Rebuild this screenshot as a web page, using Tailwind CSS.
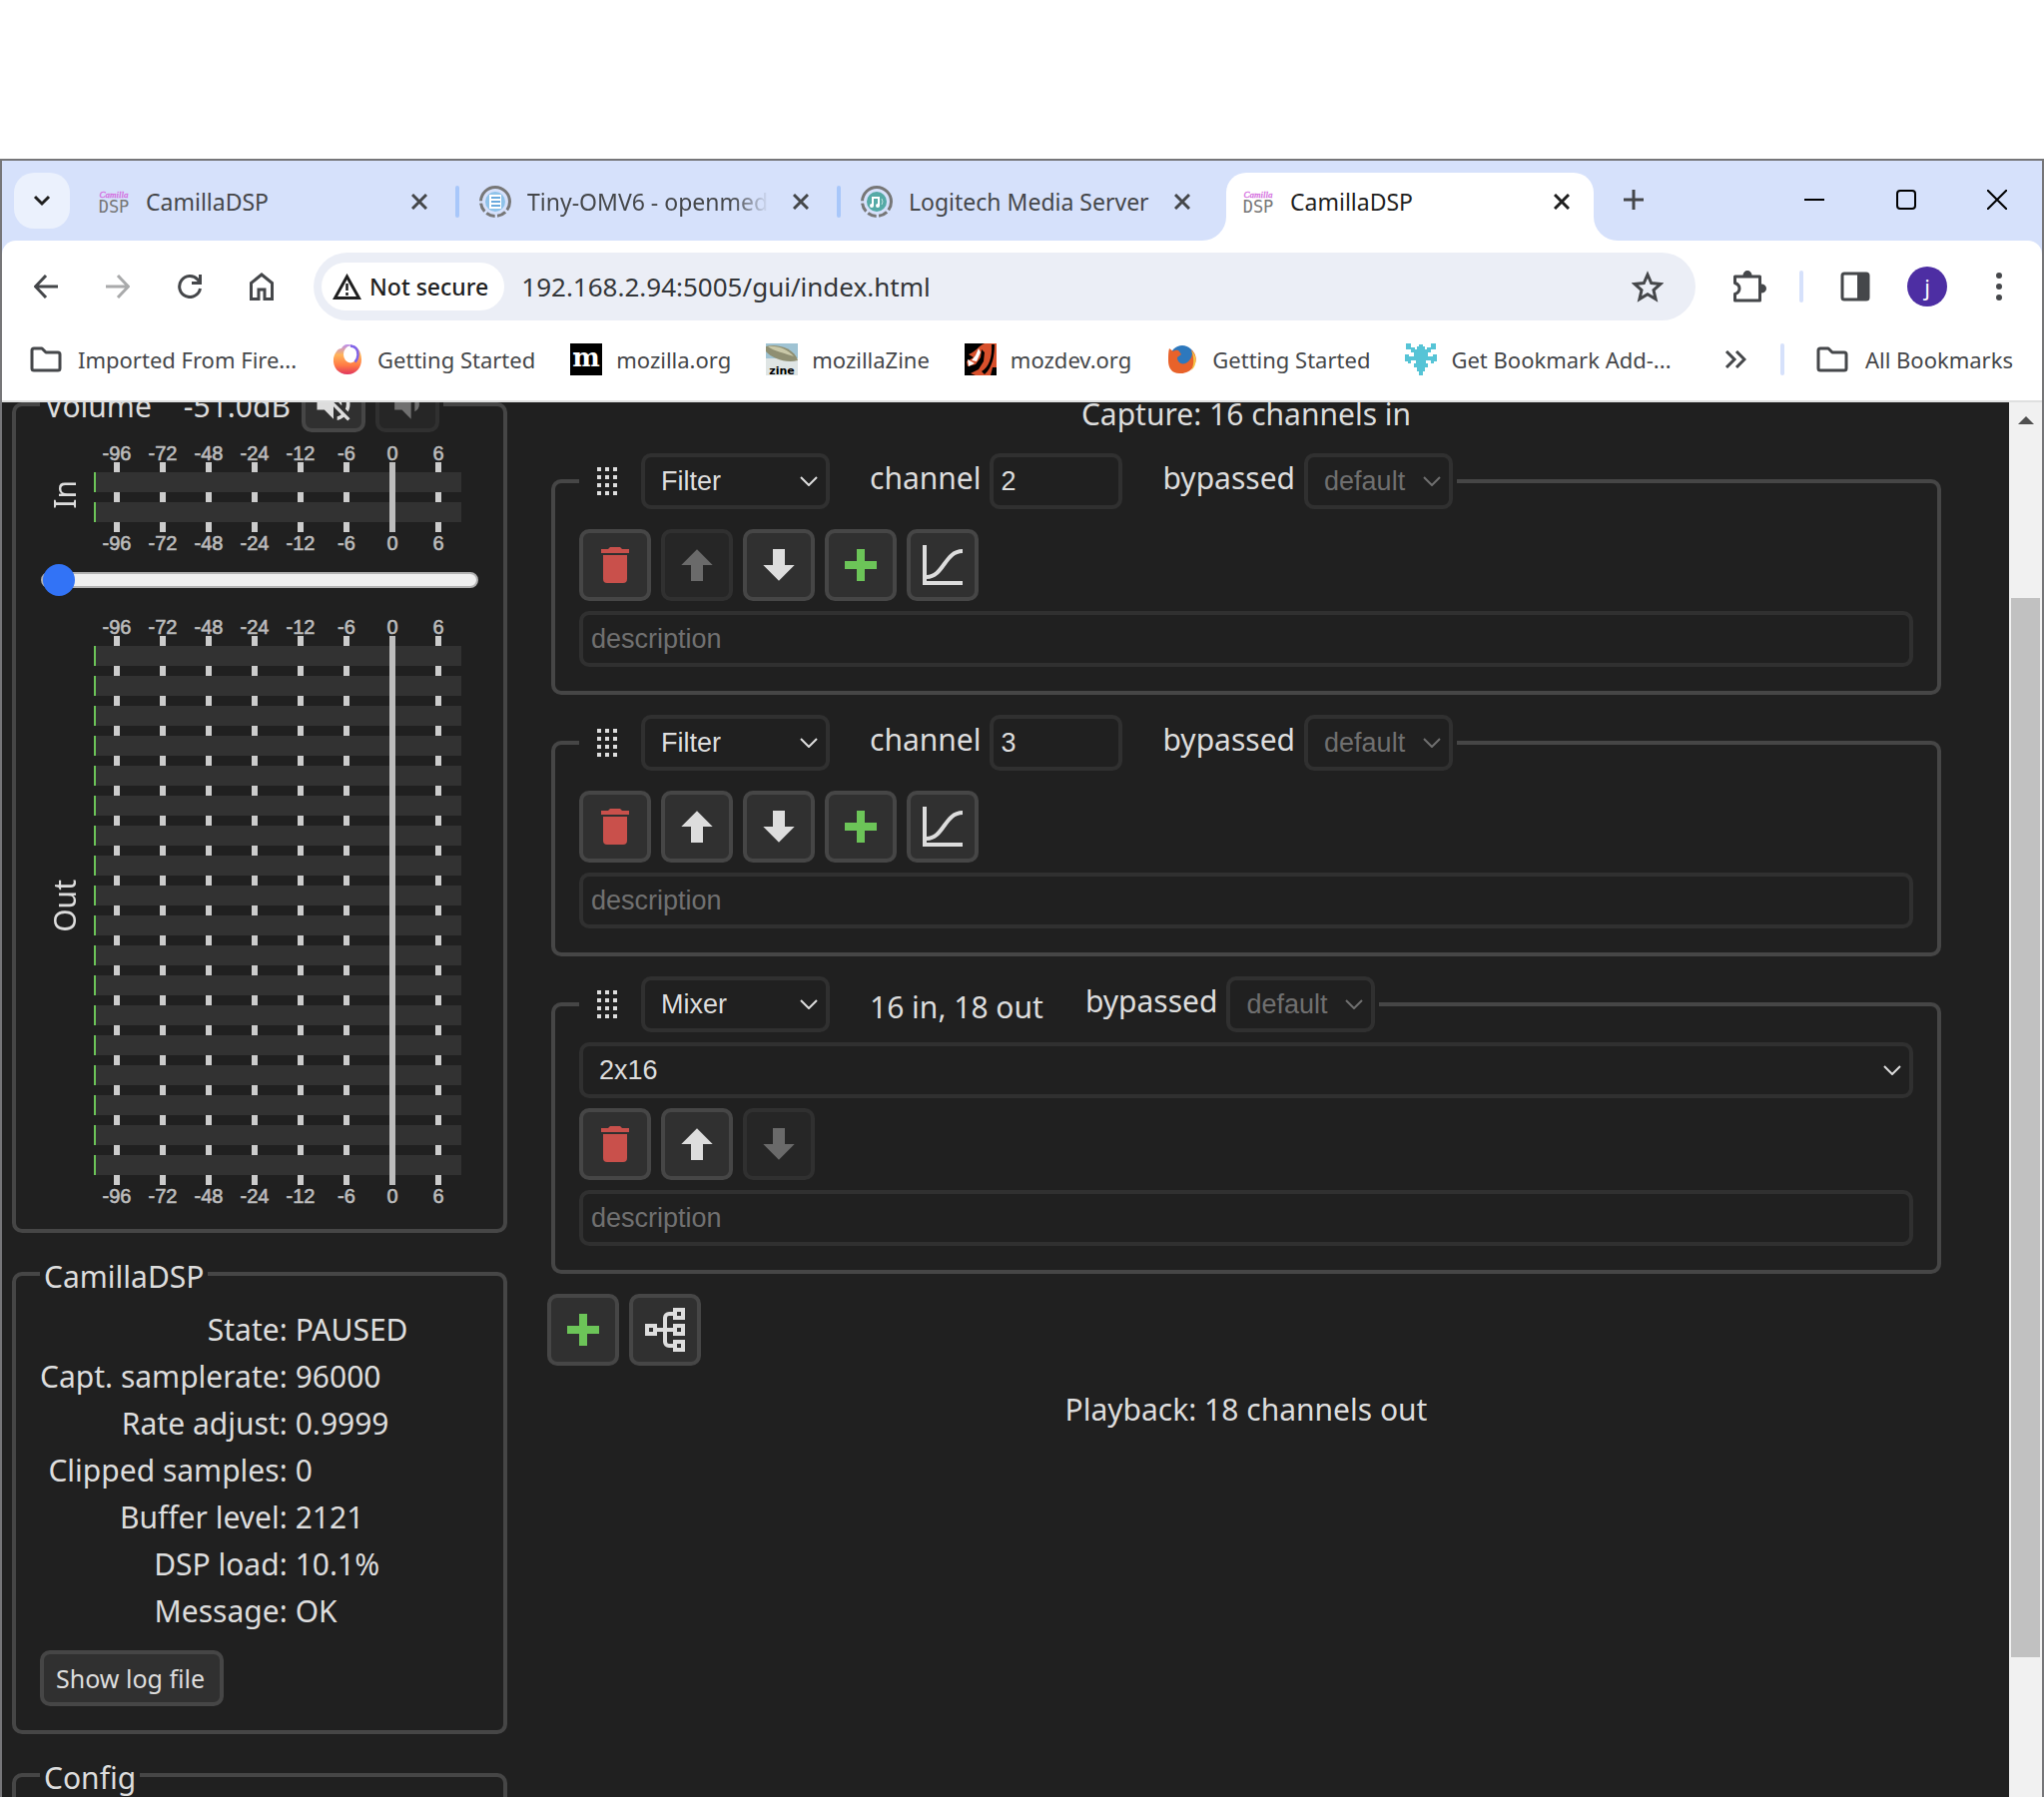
<!DOCTYPE html>
<html lang="en">
<head>
<meta charset="utf-8">
<meta name="viewport" content="width=device-width, initial-scale=1">
<title>CamillaDSP</title>
<script src="https://cdn.jsdelivr.net/npm/@tailwindcss/browser@4"></script>
</head>
<body class="bg-white font-['Noto_Sans',sans-serif]">
<svg class="hidden" aria-hidden="true">
  <symbol id="trash" viewBox="0 0 24 24"><path fill="currentColor" d="M19,4H15.5L14.5,3H9.5L8.5,4H5V6H19M6,19A2,2 0 0,0 8,21H16A2,2 0 0,0 18,19V7H6V19Z"/></symbol>
  <symbol id="up" viewBox="0 0 24 24"><path fill="currentColor" d="M15,20H9V12H4.16L12,4.16L19.84,12H15V20Z"/></symbol>
  <symbol id="down" viewBox="0 0 24 24"><path fill="currentColor" d="M9,4H15V12H19.84L12,19.84L4.16,12H9V4Z"/></symbol>
  <symbol id="plus" viewBox="0 0 24 24"><path fill="currentColor" d="M20 14H14V20H10V14H4V10H10V4H14V10H20V14Z"/></symbol>
  <symbol id="curve" viewBox="0 0 24 24"><path fill="none" stroke="currentColor" stroke-width="2" d="M3 2V21H22M4 18C12.500 18 13 5 22 5"/></symbol>
  <symbol id="tree" viewBox="0 0 24 24"><path fill="none" stroke="currentColor" stroke-width="2" d="M3 10h4v4H3zM17 2h4v4h-4zM17 10h4v4h-4zM17 18h4v4h-4zM8 12h8M16 4h-2a2 2 0 0 0-2 2v12a2 2 0 0 0 2 2h2"/></symbol>
  <symbol id="grip" viewBox="0 0 20 28"><path fill="currentColor" d="M0 0h4v4H0zM8 0h4v4H8zM16 0h4v4h-4zM0 8h4v4H0zM8 8h4v4H8zM16 8h4v4h-4zM0 16h4v4H0zM8 16h4v4H8zM16 16h4v4h-4zM0 24h4v4H0zM8 24h4v4H8zM16 24h4v4h-4z"/></symbol>
  <symbol id="chev" viewBox="0 0 18 10"><path fill="none" stroke="currentColor" stroke-width="2" d="M1 1l8 8 8-8"/></symbol>
  <symbol id="x" viewBox="0 0 16 16"><path fill="none" stroke="currentColor" stroke-width="3" d="M1 1l14 14M15 1L1 15"/></symbol>
  <symbol id="folder" viewBox="0 0 32 26"><path fill="none" stroke="currentColor" stroke-width="3" stroke-linejoin="round" d="M2 4a2 2 0 0 1 2-2h8l4 4h12a2 2 0 0 1 2 2v14a2 2 0 0 1-2 2H4a2 2 0 0 1-2-2z"/></symbol>
  <symbol id="camilla" viewBox="0 0 32 32">
    <text x="16" y="12" text-anchor="middle" font-family="Liberation Serif, serif" font-style="italic" font-size="9" fill="#d46be0" stroke="#d46be0" stroke-width="0.3">Camilla</text>
    <text x="16" y="27" text-anchor="middle" font-family="DejaVu Sans Mono, monospace" font-size="17" fill="#777">DSP</text>
  </symbol>
</svg>

<div class="h-screen pt-[159px]">
<div class="flex h-full flex-col overflow-hidden border-x-2 border-t-2 border-[#767679]">

  <header class="bg-[#d6e1fb]">
    <div class="flex h-20 items-end">
      <button aria-label="Search tabs" class="mb-3 ml-3 flex size-14 shrink-0 items-center justify-center rounded-[20px] bg-[#ebf1fd] text-[#1f1f1f]">
        <svg class="h-3 w-[18px]" viewBox="0 0 18 12"><path fill="none" stroke="currentColor" stroke-width="3" d="M2 2l7 7 7-7"/></svg>
      </button>
      <div class="ml-2 flex h-[68px] w-[382px] min-w-0 items-center pb-[10px] pl-5 text-[23px] text-[#45474a]">
        <svg class="size-8 shrink-0"><use href="#camilla"/></svg>
        <span class="ml-4 flex-1 overflow-hidden whitespace-nowrap">CamillaDSP</span>
        <button aria-label="Close tab" class="ml-6 mr-7"><svg class="size-4"><use href="#x"/></svg></button>
        <span class="h-8 w-1 rounded-full bg-[#a8c7fa]"></span>
      </div>
      <div class="flex h-[68px] w-[382px] min-w-0 items-center pb-[10px] pl-5 text-[23px] text-[#45474a]">
        <svg class="size-8 shrink-0" viewBox="0 0 32 32"><circle cx="16" cy="16" r="14.500" fill="none" stroke="#777" stroke-width="3" stroke-dasharray="9 2.500 9 2.500 9 2.500 9 2.500 45"/><circle cx="16" cy="16" r="10" fill="#8fc3ea"/><path fill="#fff" d="M10 9h12v14H10z"/><path stroke="#6aa9dd" stroke-width="2" d="M12 12h9M12 16h9M12 20h9"/></svg>
        <span class="ml-4 flex-1 overflow-hidden whitespace-nowrap [mask-image:linear-gradient(to_right,black_85%,transparent)]">Tiny-OMV6 - openmediavault</span>
        <button aria-label="Close tab" class="ml-6 mr-7"><svg class="size-4"><use href="#x"/></svg></button>
        <span class="h-8 w-1 rounded-full bg-[#a8c7fa]"></span>
      </div>
      <div class="flex h-[68px] w-[382px] min-w-0 items-center pb-[10px] pl-5 text-[23px] text-[#45474a]">
        <svg class="size-8 shrink-0" viewBox="0 0 32 32"><circle cx="16" cy="16" r="14.500" fill="none" stroke="#777" stroke-width="3" stroke-dasharray="9 2.500 9 2.500 9 2.500 9 2.500 45"/><circle cx="16" cy="16" r="10" fill="#55aaa6"/><path fill="none" stroke="#fff" stroke-width="2" d="M12 20v-8h6v8"/><circle cx="11" cy="20" r="2" fill="#fff"/><circle cx="17" cy="20" r="2" fill="#fff"/><path fill="none" stroke="#bfe0de" stroke-width="1" d="M21 13q2 3 0 6"/></svg>
        <span class="ml-4 flex-1 overflow-hidden whitespace-nowrap">Logitech Media Server</span>
        <button aria-label="Close tab" class="ml-6 mr-8"><svg class="size-4"><use href="#x"/></svg></button>
      </div>
      <div class="relative ml-1 flex h-[68px] w-[368px] min-w-0 items-center rounded-t-[20px] bg-white pb-[10px] pl-4 text-[23px] text-[#1f1f1f]">
        <svg class="absolute -left-6 bottom-0 size-6" viewBox="0 0 24 24"><path fill="#fff" d="M24 0v24H0A24 24 0 0 0 24 0z"/></svg>
        <svg class="absolute -right-6 bottom-0 size-6" viewBox="0 0 24 24"><path fill="#fff" d="M0 0v24h24A24 24 0 0 1 0 0z"/></svg>
        <svg class="size-8 shrink-0"><use href="#camilla"/></svg>
        <span class="ml-4 flex-1 overflow-hidden whitespace-nowrap">CamillaDSP</span>
        <button aria-label="Close tab" class="mr-6"><svg class="size-4"><use href="#x"/></svg></button>
      </div>
      <button aria-label="New tab" class="mb-[30px] ml-[29px] shrink-0 text-[#45474a]"><svg class="size-[22px]" viewBox="0 0 22 22"><path stroke="currentColor" stroke-width="3" d="M11 1v20M1 11h20"/></svg></button>
      <div class="mb-[21px] ml-auto flex shrink-0 text-black">
        <button aria-label="Minimize" class="flex h-10 w-[92px] items-center justify-center"><svg class="size-5" viewBox="0 0 20 20"><path stroke="currentColor" stroke-width="2" d="M0 10h20"/></svg></button>
        <button aria-label="Maximize" class="flex h-10 w-[92px] items-center justify-center"><svg class="size-5" viewBox="0 0 20 20"><rect x="1" y="1" width="18" height="18" rx="3" fill="none" stroke="currentColor" stroke-width="2"/></svg></button>
        <button aria-label="Close window" class="flex h-10 w-[90px] items-center justify-center"><svg class="size-5" viewBox="0 0 20 20"><path stroke="currentColor" stroke-width="2" d="M0 0l20 20M20 0L0 20"/></svg></button>
      </div>
    </div>

    <div class="rounded-t-[14px] border-b-2 border-[#dfe0e0] bg-white text-[#45474a]">
      <div class="flex items-center pt-3">
        <div class="ml-8 flex items-center gap-12">
          <button aria-label="Back"><svg class="size-6" viewBox="0 0 24 24"><path fill="none" stroke="currentColor" stroke-width="3" d="M24 12H2M12 1L1.500 12 12 23"/></svg></button>
          <button aria-label="Forward" class="text-[#a9aaab]"><svg class="size-6" viewBox="0 0 24 24"><path fill="none" stroke="currentColor" stroke-width="3" d="M0 12h22M12 1l10.500 11L12 23"/></svg></button>
          <button aria-label="Reload"><svg class="size-6" viewBox="0 0 24 24"><path fill="none" stroke="currentColor" stroke-width="3" d="M22.500 14A10.500 10.500 0 1 1 20 5l2.500 3"/><path fill="currentColor" d="M24 0v10H14V7h7V0z"/></svg></button>
          <button aria-label="Home"><svg class="h-7 w-6" viewBox="0 0 24 28"><path fill="none" stroke="currentColor" stroke-width="3" d="M1.500 26.500V10.500L12 2l10.500 8.500v16H15V17H9v9.500z"/></svg></button>
        </div>
        <div class="ml-10 flex h-[68px] flex-1 items-center rounded-full bg-[#ebeef6] pl-2 pr-8">
          <button class="flex h-12 items-center gap-2 rounded-full bg-white pl-[11px] pr-4 text-[23px] font-medium text-[#1f1f1f]">
            <svg class="h-[26px] w-[29px]" viewBox="0 0 29 26"><path fill="none" stroke="currentColor" stroke-width="3" d="M14.500 3L26.500 24.500h-24z"/><path stroke="currentColor" stroke-width="2.500" d="M14.500 10v7M14.500 19v3"/></svg>
            <span class="whitespace-nowrap">Not secure</span>
          </button>
          <input type="text" aria-label="Address" value="192.168.2.94:5005/gui/index.html" class="ml-[17px] min-w-0 flex-1 bg-transparent text-[26px] text-[#333639] outline-none">
          <button aria-label="Bookmark this page"><svg class="size-8" viewBox="0 0 32 32"><path fill="none" stroke="currentColor" stroke-width="3" d="M16 4l3.700 8.600 9.300.8-7 6.100 2.100 9.100L16 23.800l-8.100 4.800L10 19.500l-7-6.100 9.300-.8z"/></svg></button>
        </div>
        <button aria-label="Extensions" class="ml-[37px]"><svg class="h-8 w-[34px]" viewBox="0 0 34 32"><path fill="none" stroke="currentColor" stroke-width="3" stroke-linejoin="round" d="M2.500 6h25v24h-25v-6.500c6-2 6-9 0-11z"/><path fill="currentColor" d="M10.500 5a4.500 5 0 0 1 9 0zM29 13.500a5 4.500 0 0 1 0 9z"/></svg></button>
        <span class="ml-[33px] h-8 w-1 rounded-full bg-[#d6e1fb]"></span>
        <button aria-label="Side panel" class="ml-[37px]"><svg class="h-[30px] w-[30px]" viewBox="0 0 30 30"><rect x="2" y="2" width="26" height="26" rx="2" fill="none" stroke="currentColor" stroke-width="3"/><path fill="currentColor" d="M17 2h11v26H17z"/></svg></button>
        <button aria-label="Profile" class="ml-[37px] flex size-10 items-center justify-center rounded-full bg-[#4d2ea3] text-[22px] text-white">j</button>
        <button aria-label="Menu" class="ml-[49px] mr-10"><svg class="h-7 w-[6px]" viewBox="0 0 6 28"><path fill="currentColor" d="M3 0a3 3 0 1 1 0 6 3 3 0 0 1 0-6M3 11a3 3 0 1 1 0 6 3 3 0 0 1 0-6M3 22a3 3 0 1 1 0 6 3 3 0 0 1 0-6"/></svg></button>
      </div>
      <nav class="flex h-20 items-center whitespace-nowrap pb-[2px] pl-7 pr-[29px] text-[22px]">
        <div class="flex min-w-0 flex-1 items-center gap-[35px] overflow-hidden">
          <a href="#" class="flex items-center gap-4"><svg class="h-[26px] w-8"><use href="#folder"/></svg>Imported From Fire...</a>
          <a href="#" class="flex items-center gap-[14px]"><svg class="size-8" viewBox="0 0 32 32"><defs><linearGradient id="ffg" x1="0.500" x2="0.500" y1="0" y2="1"><stop offset="0" stop-color="#b98cf0"/><stop offset=".35" stop-color="#ffb45a"/><stop offset=".7" stop-color="#ff7a45"/><stop offset="1" stop-color="#e0355e"/></linearGradient></defs><path fill="url(#ffg)" d="M16 1C26 1 30 8 30 16S25 31 16 31 1 24 2 15C3 10 6 5 10 5c1-2 3-4 6-4z"/><ellipse cx="19" cy="11" rx="7" ry="8.500" fill="#fff"/><path fill="none" stroke="#8064e8" stroke-width="2.500" d="M19 2.500q8 1 7.500 9-.5 5-3 7"/></svg>Getting Started</a>
          <a href="#" class="flex items-center gap-[14px]"><svg class="size-8" viewBox="0 0 32 32"><path d="M0 0h32v32H0z"/><text x="16" y="23" text-anchor="middle" font-family="DejaVu Serif, serif" font-weight="bold" font-size="26" fill="#fff">m</text></svg>mozilla.org</a>
          <a href="#" class="flex items-center gap-[14px]"><svg class="size-8" viewBox="0 0 32 32"><path fill="#9fc3d3" d="M0 0h32v24H0z"/><path fill="#dfe5e4" d="M0 15h32v17H0z"/><path fill="#8f8f72" d="M0 3C10 0 28 4 32 17 20 20 6 15 0 8z"/><path fill="#c9c8a8" d="M2 3c10-1 20 3 26 10C20 10 8 8 2 3z"/><text x="16" y="31" text-anchor="middle" font-family="DejaVu Sans, sans-serif" font-weight="bold" font-size="11" fill="#000">zine</text></svg>mozillaZine</a>
          <a href="#" class="flex items-center gap-[14px]"><svg class="size-8" viewBox="0 0 32 32"><path fill="#d8502c" d="M0 0h32v32H0z"/><path d="M0 0h20C14 2 12 8 4 11l5 3-7 4 1 5 8-2 5-7 1-8 3 3-1 9-5 8-8 4 5 2H0zM27 1C28 14 24 24 17 28l3 3C28 24 30 12 30 1z"/><path fill="#fff" d="M14 5l2 4-4 9-5-1 4-5zM3 16l7 4-6 3z"/><path d="M28 24h4v8h-6z"/></svg>mozdev.org</a>
          <a href="#" class="flex items-center gap-[14px]"><svg class="size-8" viewBox="0 0 32 32"><circle cx="16" cy="14" r="12" fill="#2d78bd"/><path fill="#e8622a" d="M3 5l4 3c3-2 5-1 6 0l2 3-4 3c0 6 6 8 10 5 5-4 6-9 4-13 5 4 6 11 3 16-3 6-9 8-13 8C6 31 2 25 2 17c0-5 0-8 1-12z"/><path fill="#f6c544" d="M25 7c6 5 6 15 0 20 3-6 3-13 0-20z"/></svg>Getting Started</a>
          <a href="#" class="flex items-center gap-[14px]"><svg class="size-8" viewBox="0 0 32 32"><path fill="#56c4d6" d="M1 0h5v4h4v2h2V3h2V1h4v2h2v3h2V4h4V0h5v6h-5v3h-3v4h5v-2h4v7h-3v2h-3v-3h-5v3h2v4h-3v4h-2v4h-4v-4h-2v-4H9v-4h2v-3H6v3H3v-2H0v-7h4v2h5V9H6V6H1z"/></svg>Get Bookmark Add-...</a>
        </div>
        <button aria-label="More bookmarks" class="mr-[34px]"><svg class="h-[18px] w-[22px]" viewBox="0 0 22 18"><path fill="none" stroke="currentColor" stroke-width="3" d="M2 1l8 8-8 8M12 1l8 8-8 8"/></svg></button>
        <span class="h-8 w-1 rounded-full bg-[#d6e1fb]"></span>
        <a href="#" class="ml-8 flex items-center gap-[17px]"><svg class="h-[26px] w-8"><use href="#folder"/></svg>All Bookmarks</a>
      </nav>
    </div>
  </header>

  <div class="flex min-h-0 flex-1 overflow-hidden bg-[#202020] text-[30px] leading-[42px] text-[#dddddd]">
    <aside class="-mt-[26px] ml-[10px] flex w-[496px] shrink-0 flex-col gap-5">
      <fieldset class="shrink-0 rounded-[10px] border-4 border-[#464646] px-6 pb-[22px]">
        <legend class="flex h-14 items-center pl-[5px] pr-1">
          <span class="pt-1">Volume</span><span class="ml-8 pt-1">-51.0dB</span>
          <button aria-label="Mute" class="ml-[11px] flex h-14 w-16 items-center justify-center rounded-[10px] border-4 border-[#464646] bg-[#303030]"><svg class="size-11 shrink-0" viewBox="0 0 24 24"><path fill="currentColor" d="M12,4L9.91,6.09L12,8.18M4.27,3L3,4.27L7.73,9H3V15H7L12,20V13.27L16.25,17.53C15.58,18.04 14.83,18.46 14,18.7V20.77C15.38,20.45 16.63,19.82 17.68,18.96L19.73,21L21,19.73L12,10.73M19,12C19,12.94 18.8,13.82 18.46,14.64L19.97,16.15C20.62,14.91 21,13.5 21,12C21,7.72 18,4.14 14,3.23V5.29C16.89,6.15 19,8.83 19,12M16.5,12C16.5,10.23 15.5,8.71 14,7.97V10.18L16.45,12.63C16.5,12.43 16.5,12.21 16.5,12Z"/></svg></button>
          <button disabled aria-label="Dim" class="ml-[10px] flex h-14 w-16 items-center justify-center rounded-[10px] border-4 border-[#303030] bg-[#262626] text-[#707070]"><svg class="size-11 shrink-0" viewBox="0 0 24 24"><path fill="currentColor" d="M5,9V15H9L14,20V4L9,9M18.500,12C18.500,10.230 17.500,8.710 16,7.970V16C17.500,15.290 18.500,13.760 18.500,12Z"/></svg></button>
        </legend>
        <div class="mt-[10px] flex items-center">
          <span class="w-[54px] shrink-0 pb-2 pl-1"><span class="block w-[42px] rotate-180 text-center [writing-mode:vertical-rl]">In</span></span>
          <svg class="h-[112px] w-[368px]" data-meter="2"></svg>
        </div>
        <input type="range" aria-label="Volume" min="-51" max="0" value="-51" class="mx-auto my-[18px] block h-4 w-[438px] appearance-none rounded-full border-2 border-[#b2b2b2] bg-[#efefef] bg-linear-to-r from-[#3273f6] from-5% to-[#efefef] to-5% [&::-webkit-slider-thumb]:size-8 [&::-webkit-slider-thumb]:appearance-none [&::-webkit-slider-thumb]:rounded-full [&::-webkit-slider-thumb]:bg-[#3273f6]">
        <div class="mt-7 flex items-center">
          <span class="w-[54px] shrink-0 pb-3 pl-1"><span class="block w-[42px] rotate-180 text-center [writing-mode:vertical-rl]">Out</span></span>
          <svg class="h-[592px] w-[368px]" data-meter="18"></svg>
        </div>
      </fieldset>

      <fieldset class="shrink-0 rounded-[10px] border-4 border-[#464646] px-6 pb-6">
        <legend class="h-[42px] px-1 leading-[48px]">CamillaDSP</legend>
        <table class="mt-[11px] leading-[47px]">
          <tr><th scope="row" class="w-[242px] p-0 text-right font-normal whitespace-nowrap">State:</th><td class="pl-2">PAUSED</td></tr>
          <tr><th scope="row" class="p-0 text-right font-normal whitespace-nowrap">Capt. samplerate:</th><td class="pl-2">96000</td></tr>
          <tr><th scope="row" class="p-0 text-right font-normal whitespace-nowrap">Rate adjust:</th><td class="pl-2">0.9999</td></tr>
          <tr><th scope="row" class="p-0 text-right font-normal whitespace-nowrap">Clipped samples:</th><td class="pl-2">0</td></tr>
          <tr><th scope="row" class="p-0 text-right font-normal whitespace-nowrap">Buffer level:</th><td class="pl-2">2121</td></tr>
          <tr><th scope="row" class="p-0 text-right font-normal whitespace-nowrap">DSP load:</th><td class="pl-2">10.1%</td></tr>
          <tr><th scope="row" class="p-0 text-right font-normal whitespace-nowrap">Message:</th><td class="pl-2">OK</td></tr>
        </table>
        <button class="mt-4 flex h-14 items-center rounded-[10px] border-4 border-[#464646] bg-[#303030] pl-3 pr-[15px] text-[25px]">Show log file</button>
      </fieldset>

      <fieldset class="h-40 shrink-0 rounded-[10px] border-4 border-[#464646] px-6 pb-6">
        <legend class="h-[42px] px-1 leading-[48px]">Config</legend>
      </fieldset>
    </aside>

    <main class="-mt-[11px] ml-10 mr-16 flex min-w-0 flex-1 flex-col gap-5">
      <p class="h-[42px] text-center leading-[46px]">Capture: 16 channels in</p>

      <fieldset class="mx-1 rounded-[10px] border-4 border-[#464646] px-6 pb-6">
        <legend class="flex h-14 items-center pl-[18px] pr-1">
          <svg class="mr-6 h-7 w-5"><use href="#grip"/></svg>
          <span class="mr-10 grid items-center"><select aria-label="Step type" class="col-start-1 row-start-1 h-14 w-[189px] appearance-none rounded-[10px] border-4 border-[#303030] bg-[#202020] pl-4 font-['Liberation_Sans',sans-serif] text-[27px]"><option>Filter</option><option>Mixer</option></select><svg class="pointer-events-none col-start-1 row-start-1 mr-3 h-[10px] w-[18px] justify-self-end"><use href="#chev"/></svg></span>
          <label for="ch1" class="pb-[6px]">channel</label>
          <input id="ch1" type="text" value="2" class="ml-2 mr-[41px] h-14 w-[133px] rounded-[10px] border-4 border-[#303030] bg-[#202020] pl-2 font-['Liberation_Sans',sans-serif] text-[27px]">
          <label for="bp1" class="pb-[6px]">bypassed</label>
          <span class="ml-[9px] grid items-center text-[#6f6f6f]"><select id="bp1" disabled class="col-start-1 row-start-1 h-14 w-[149px] appearance-none rounded-[10px] border-4 border-[#303030] bg-[#202020] pl-4 font-['Liberation_Sans',sans-serif] text-[27px]"><option>default</option></select><svg class="pointer-events-none col-start-1 row-start-1 mr-3 h-[10px] w-[18px] justify-self-end"><use href="#chev"/></svg></span>
        </legend>
        <div class="mt-5 flex gap-[10px]">
          <button aria-label="Delete step" class="flex size-[72px] items-center justify-center rounded-[10px] border-4 border-[#464646] bg-[#303030] text-[#c9504b]"><svg class="size-12"><use href="#trash"/></svg></button>
          <button disabled aria-label="Move up" class="flex size-[72px] items-center justify-center rounded-[10px] border-4 border-[#303030] bg-[#262626] text-[#6a6a6a]"><svg class="size-12"><use href="#up"/></svg></button>
          <button aria-label="Move down" class="flex size-[72px] items-center justify-center rounded-[10px] border-4 border-[#464646] bg-[#303030]"><svg class="size-12"><use href="#down"/></svg></button>
          <button aria-label="Add filter" class="flex size-[72px] items-center justify-center rounded-[10px] border-4 border-[#464646] bg-[#303030] text-[#6cc458]"><svg class="size-12"><use href="#plus"/></svg></button>
          <button aria-label="Plot" class="flex size-[72px] items-center justify-center rounded-[10px] border-4 border-[#464646] bg-[#303030]"><svg class="size-12"><use href="#curve"/></svg></button>
        </div>
        <input type="text" aria-label="Description" placeholder="description" class="mt-[10px] block h-14 w-full rounded-[10px] border-4 border-[#303030] bg-[#202020] pl-2 font-['Liberation_Sans',sans-serif] text-[27px] placeholder:text-[#707070]">
      </fieldset>

      <fieldset class="mx-1 rounded-[10px] border-4 border-[#464646] px-6 pb-6">
        <legend class="flex h-14 items-center pl-[18px] pr-1">
          <svg class="mr-6 h-7 w-5"><use href="#grip"/></svg>
          <span class="mr-10 grid items-center"><select aria-label="Step type" class="col-start-1 row-start-1 h-14 w-[189px] appearance-none rounded-[10px] border-4 border-[#303030] bg-[#202020] pl-4 font-['Liberation_Sans',sans-serif] text-[27px]"><option>Filter</option><option>Mixer</option></select><svg class="pointer-events-none col-start-1 row-start-1 mr-3 h-[10px] w-[18px] justify-self-end"><use href="#chev"/></svg></span>
          <label for="ch2" class="pb-[6px]">channel</label>
          <input id="ch2" type="text" value="3" class="ml-2 mr-[41px] h-14 w-[133px] rounded-[10px] border-4 border-[#303030] bg-[#202020] pl-2 font-['Liberation_Sans',sans-serif] text-[27px]">
          <label for="bp2" class="pb-[6px]">bypassed</label>
          <span class="ml-[9px] grid items-center text-[#6f6f6f]"><select id="bp2" disabled class="col-start-1 row-start-1 h-14 w-[149px] appearance-none rounded-[10px] border-4 border-[#303030] bg-[#202020] pl-4 font-['Liberation_Sans',sans-serif] text-[27px]"><option>default</option></select><svg class="pointer-events-none col-start-1 row-start-1 mr-3 h-[10px] w-[18px] justify-self-end"><use href="#chev"/></svg></span>
        </legend>
        <div class="mt-5 flex gap-[10px]">
          <button aria-label="Delete step" class="flex size-[72px] items-center justify-center rounded-[10px] border-4 border-[#464646] bg-[#303030] text-[#c9504b]"><svg class="size-12"><use href="#trash"/></svg></button>
          <button aria-label="Move up" class="flex size-[72px] items-center justify-center rounded-[10px] border-4 border-[#464646] bg-[#303030]"><svg class="size-12"><use href="#up"/></svg></button>
          <button aria-label="Move down" class="flex size-[72px] items-center justify-center rounded-[10px] border-4 border-[#464646] bg-[#303030]"><svg class="size-12"><use href="#down"/></svg></button>
          <button aria-label="Add filter" class="flex size-[72px] items-center justify-center rounded-[10px] border-4 border-[#464646] bg-[#303030] text-[#6cc458]"><svg class="size-12"><use href="#plus"/></svg></button>
          <button aria-label="Plot" class="flex size-[72px] items-center justify-center rounded-[10px] border-4 border-[#464646] bg-[#303030]"><svg class="size-12"><use href="#curve"/></svg></button>
        </div>
        <input type="text" aria-label="Description" placeholder="description" class="mt-[10px] block h-14 w-full rounded-[10px] border-4 border-[#303030] bg-[#202020] pl-2 font-['Liberation_Sans',sans-serif] text-[27px] placeholder:text-[#707070]">
      </fieldset>

      <fieldset class="mx-1 rounded-[10px] border-4 border-[#464646] px-6 pb-6">
        <legend class="flex h-14 items-center pl-[18px] pr-1">
          <svg class="mr-6 h-7 w-5"><use href="#grip"/></svg>
          <span class="mr-10 grid items-center"><select aria-label="Step type" class="col-start-1 row-start-1 h-14 w-[189px] appearance-none rounded-[10px] border-4 border-[#303030] bg-[#202020] pl-4 font-['Liberation_Sans',sans-serif] text-[27px]"><option>Mixer</option><option>Filter</option></select><svg class="pointer-events-none col-start-1 row-start-1 mr-3 h-[10px] w-[18px] justify-self-end"><use href="#chev"/></svg></span>
          <span class="mr-[42px] pt-[6px]">16 in, 18 out</span>
          <label for="bp3" class="pb-[6px]">bypassed</label>
          <span class="ml-[9px] grid items-center text-[#6f6f6f]"><select id="bp3" disabled class="col-start-1 row-start-1 h-14 w-[149px] appearance-none rounded-[10px] border-4 border-[#303030] bg-[#202020] pl-4 font-['Liberation_Sans',sans-serif] text-[27px]"><option>default</option></select><svg class="pointer-events-none col-start-1 row-start-1 mr-3 h-[10px] w-[18px] justify-self-end"><use href="#chev"/></svg></span>
        </legend>
        <span class="mt-[10px] grid items-center"><select aria-label="Mixer" class="col-start-1 row-start-1 h-14 w-full appearance-none rounded-[10px] border-4 border-[#303030] bg-[#202020] pl-4 font-['Liberation_Sans',sans-serif] text-[27px]"><option>2x16</option></select><svg class="pointer-events-none col-start-1 row-start-1 mr-3 h-[10px] w-[18px] justify-self-end"><use href="#chev"/></svg></span>
        <div class="mt-[10px] flex gap-[10px]">
          <button aria-label="Delete step" class="flex size-[72px] items-center justify-center rounded-[10px] border-4 border-[#464646] bg-[#303030] text-[#c9504b]"><svg class="size-12"><use href="#trash"/></svg></button>
          <button aria-label="Move up" class="flex size-[72px] items-center justify-center rounded-[10px] border-4 border-[#464646] bg-[#303030]"><svg class="size-12"><use href="#up"/></svg></button>
          <button disabled aria-label="Move down" class="flex size-[72px] items-center justify-center rounded-[10px] border-4 border-[#303030] bg-[#262626] text-[#6a6a6a]"><svg class="size-12"><use href="#down"/></svg></button>
        </div>
        <input type="text" aria-label="Description" placeholder="description" class="mt-[10px] block h-14 w-full rounded-[10px] border-4 border-[#303030] bg-[#202020] pl-2 font-['Liberation_Sans',sans-serif] text-[27px] placeholder:text-[#707070]">
      </fieldset>

      <div class="flex gap-[10px]">
        <button aria-label="Add step" class="flex size-[72px] items-center justify-center rounded-[10px] border-4 border-[#464646] bg-[#303030] text-[#6cc458]"><svg class="size-12"><use href="#plus"/></svg></button>
        <button aria-label="Plot pipeline" class="flex size-[72px] items-center justify-center rounded-[10px] border-4 border-[#464646] bg-[#303030]"><svg class="size-12"><use href="#tree"/></svg></button>
      </div>
      <p class="h-[42px] text-center leading-[48px]">Playback: 18 channels out</p>
    </main>

    <div class="relative w-[33px] shrink-0 bg-[#f1f1f1] px-[2px]" aria-hidden="true">
      <svg class="mx-auto mt-[14px] h-2 w-4" viewBox="0 0 16 8"><path fill="#505050" d="M8 0l8 8H0z"/></svg>
      <div class="absolute inset-x-[2px] top-[14%] h-[76%] bg-[#c1c1c1]"></div>
    </div>
  </div>
</div>
</div>

<script>
// Level meters: one horizontal bar per channel with dB ticks between the bars.
const marks = [-96, -72, -48, -24, -12, -6, 0, 6];
document.querySelectorAll('[data-meter]').forEach(svg => {
  const n = +svg.dataset.meter, end = 20 + n * 30 + 10;
  let out = '';
  for (let i = 0; i < n; i++) {
    out += `<rect x="0" y="${30 + i * 30}" width="368" height="20" fill="#323232"/>`;
    out += `<rect x="0" y="${30 + i * 30}" width="2" height="20" fill="#6cc458"/>`;
  }
  marks.forEach((m, k) => {
    const x = 23 + k * 46;
    if (m === 0) out += `<rect x="${x - 3}" y="20" width="6" height="${end - 20}" fill="#bdbdbd"/>`;
    else for (let i = 0; i <= n; i++) out += `<rect x="${x - 3}" y="${20 + i * 30}" width="6" height="10" fill="#cccccc"/>`;
    for (const y of [18, end + 18])
      out += `<text x="${x}" y="${y}" text-anchor="middle" font-family="Liberation Sans, sans-serif" font-size="20" fill="#bcbcbc" stroke="#bcbcbc" stroke-width="0.6">${m}</text>`;
  });
  svg.innerHTML = out;
});
</script>
</body>
</html>
